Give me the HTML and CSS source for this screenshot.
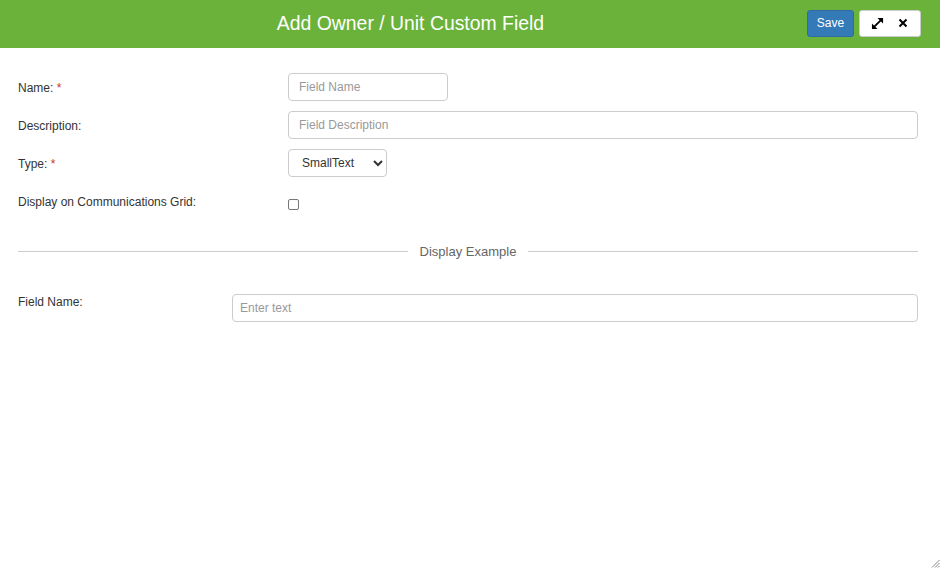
FILE: index.html
```html
<!DOCTYPE html>
<html>
<head>
<meta charset="utf-8">
<link rel="stylesheet" href="styles.css">
</head>
<body>
<div class="dialog">
  <header class="head">
    <div class="title">Add Owner / Unit Custom Field</div>
    <div class="actions">
      <button class="btn-save">Save</button>
      <div class="btn-group">
        <span class="ico">
          <svg width="13" height="13" viewBox="0 0 14 14">
            <path d="M3 11 L11 3" stroke="#000" stroke-width="2"/>
            <path d="M7 1 H13 V7 Z" fill="#000"/>
            <path d="M1 7 V13 H7 Z" fill="#000"/>
          </svg>
        </span>
        <span class="ico">
          <svg width="10" height="10" viewBox="0 0 10 10">
            <path d="M1.5 1.5 L8.5 8.5 M8.5 1.5 L1.5 8.5" stroke="#000" stroke-width="2"/>
          </svg>
        </span>
      </div>
    </div>
  </header>
  <main class="body">
    <div class="row">
      <label class="lbl">Name: <span class="req">*</span></label>
      <input class="inp inp-name" placeholder="Field Name">
    </div>
    <div class="row">
      <label class="lbl">Description:</label>
      <input class="inp inp-wide" placeholder="Field Description">
    </div>
    <div class="row">
      <label class="lbl">Type: <span class="req">*</span></label>
      <select class="sel"><option>SmallText</option></select>
    </div>
    <div class="row">
      <label class="lbl">Display on Communications Grid:</label>
      <span class="chk"></span>
    </div>
    <div class="divider">
      <span class="line"></span>
      <span class="divtext">Display Example</span>
      <span class="line"></span>
    </div>
    <div class="row ex">
      <label class="lbl lbl-ex">Field Name:</label>
      <input class="inp inp-wide" placeholder="Enter text">
    </div>
  </main>
  <div class="grip">
    <svg width="10" height="10" viewBox="0 0 10 10">
      <path d="M9.5 2 L2 9.5 M9.5 5 L5 9.5 M9.5 8 L8 9.5" stroke="#888" stroke-width="1"/>
    </svg>
  </div>
</div>
</body>
</html>
```
FILE: styles.css
```css
* { box-sizing: border-box; }
html, body { margin: 0; padding: 0; }
body {
  width: 940px;
  height: 568px;
  background: #fff;
  font-family: "Liberation Sans", Arial, sans-serif;
  color: #333;
  overflow: hidden;
}
.dialog { position: relative; width: 940px; height: 568px; }
.head {
  height: 48px;
  background: #6ab23a;
  display: flex;
  align-items: center;
  padding: 0 19px 0 14px;
}
.title {
  flex: 1;
  text-align: center;
  color: #fff;
  font-size: 19.4px;
  line-height: 24px;
  padding-bottom: 2px;
}
.actions { display: flex; gap: 5px; align-items: center; margin-top: -2px; }
.btn-save {
  width: 47px;
  height: 27px;
  background: #337ab7;
  border: 1px solid #2e6da4;
  border-radius: 3px;
  color: #fff;
  font-family: "Liberation Sans", Arial, sans-serif;
  font-size: 12px;
  padding: 0;
}
.btn-group {
  width: 62px;
  height: 27px;
  background: #fff;
  border: 1px solid #ccc;
  border-radius: 3px;
  display: flex;
  align-items: center;
  padding-left: 11px;
  gap: 14px;
}
.ico { display: flex; align-items: center; }
.body { padding: 25px 22px 0 18px; }
.row {
  display: flex;
  align-items: center;
  height: 28px;
  margin-bottom: 10px;
}
.lbl {
  width: 270px;
  flex: none;
  font-size: 12px;
  padding-top: 2px;
}
.req { color: #c9302c; }
.inp {
  height: 28px;
  border: 1px solid #ccc;
  border-radius: 4px;
  padding: 0 10px;
  font-family: "Liberation Sans", Arial, sans-serif;
  font-size: 12px;
  color: #555;
  outline: none;
}
.inp::placeholder { color: #999; }
.inp-name { width: 160px; }
.inp-wide { flex: 1; }
.inp-ex { padding-left: 7px; }
.sel {
  width: 99px;
  height: 28px;
  border: 1px solid #ccc;
  border-radius: 4px;
  background: #fff;
  padding: 0 0 0 9px;
  font-family: "Liberation Sans", Arial, sans-serif;
  font-size: 12px;
  color: #333;
}
.chk {
  width: 11px;
  height: 11px;
  border: 1px solid #767676;
  border-radius: 2px;
  margin-top: 6px;
}
.divider {
  display: flex;
  align-items: center;
  margin-top: 27px;
  height: 18px;
}
.line { flex: 1; height: 1px; background: #ccc; }
.divtext {
  font-size: 13px;
  color: #666;
  padding: 0 12px;
}
.ex {
  margin-top: 34px;
  align-items: flex-start;
}
.ex .inp { padding-left: 7px; }
.lbl-ex { width: 214px; padding-top: 1px; }
.grip { position: absolute; right: 0; bottom: 0; width: 10px; height: 10px; }
.grip svg { display: block; }
```
